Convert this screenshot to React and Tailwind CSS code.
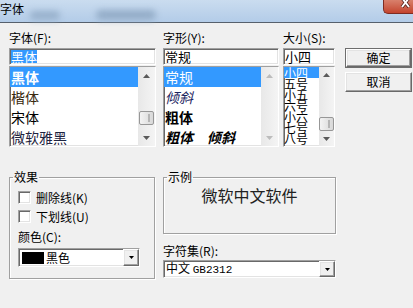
import React from 'react';

const sunken =
  'border border-t-[#a0a0a0] border-l-[#a0a0a0] border-r-white border-b-white shadow-[inset_1px_1px_0_#696969,inset_-1px_-1px_0_#e3e3e3] bg-white';
const raised =
  'border border-t-white border-l-white border-r-[#696969] border-b-[#696969] shadow-[inset_-1px_-1px_0_#a0a0a0,inset_1px_1px_0_#e3e3e3] bg-[#f0f0f0]';

const Arrow = ({ up, color = '#5a5a5a' }) => (
  <svg width="7" height="4" viewBox="0 0 7 4">
    <path d={up ? 'M0 4 L3.5 0 L7 4 Z' : 'M0 0 L3.5 4 L7 0 Z'} fill={color} />
  </svg>
);

const ScrollBar = ({ width = 'w-[17px]', thumb, thumbTop = 0, disabled }) => (
  <div className={`${width} h-full flex flex-col bg-gradient-to-r from-[#e8e8e8] to-[#f4f4f4]`}>
    <div className="h-[17px] flex items-center justify-center">
      <Arrow up color={disabled ? '#bcbcbc' : '#5a5a5a'} />
    </div>
    <div className="flex-1 flex flex-col items-center">
      {thumb && (
        <div
          className="w-[15px] h-[14px] rounded-[2px] border border-[#979797] bg-gradient-to-r from-[#f3f3f3] to-[#d8d8d8] flex items-center justify-end pr-[3px]"
          style={{ marginTop: thumbTop }}
        >
          <div className="w-[2px] h-[8px] border-l border-r border-[#b5b5b5]" />
        </div>
      )}
    </div>
    <div className="h-[17px] flex items-center justify-center">
      <Arrow color={disabled ? '#bcbcbc' : '#5a5a5a'} />
    </div>
  </div>
);

const Label = ({ children }) => (
  <div className="h-[17px] text-[12px] leading-[14px] text-black whitespace-nowrap">{children}</div>
);

const Input = ({ children }) => (
  <div className={`${sunken} h-[17px] mb-[1px] px-[1px] text-[13px] leading-[13px] flex items-center overflow-hidden`}>
    {children}
  </div>
);

const DropButton = ({ className }) => (
  <div className={`${raised} ${className} flex items-center justify-center`}>
    <svg width="5" height="3" viewBox="0 0 5 3">
      <path d="M0 0 L2.5 3 L5 0 Z" fill="#000" />
    </svg>
  </div>
);

const fonts = [
  { name: '黑体', cls: 'font-bold' },
  { name: '楷体', cls: 'text-[#3a2a10]' },
  { name: '宋体', cls: '' },
  { name: '微软雅黑', cls: 'text-[#1e2440]' },
];

const styles = [
  { name: '常规', cls: '' },
  { name: '倾斜', cls: 'italic text-[#1c2560]' },
  { name: '粗体', cls: 'font-bold' },
  { name: '粗体　倾斜', cls: 'font-bold italic whitespace-pre' },
];

const sizes = ['小四', '五号', '小五', '六号', '小六', '七号', '八号'];

export default function App() {
  return (
    <div className="w-[413px] h-[308px] bg-[#f0f0f0] overflow-hidden flex flex-col font-['Noto_Sans_CJK_SC',sans-serif] text-black">
      {/* title bar */}
      <div className="h-[23px] flex items-start bg-gradient-to-b from-[#cadcef] to-[#b3cce8] border-b border-[#56606c]">
        <div className="text-[12px] leading-[14px] pt-[2px]">字体</div>
        <div className="ml-[6px] mt-[11px] w-[30px] h-[9px] rounded-full bg-[#98b1cc] blur-[3px]" />
        <div className="ml-[36px] mt-[10px] w-[60px] h-[10px] rounded-full bg-[#94adc8] blur-[3px]" />
        <div className="ml-auto w-[30px] h-[14px] rounded-bl-[5px] border border-t-0 border-r-0 border-[#7e2c22] bg-gradient-to-b from-[#d8806c] to-[#c3432d] flex justify-end overflow-hidden">
          <svg width="12" height="8" viewBox="0 0 12 8" className="mr-[1px]">
            <path d="M2 -2 L9 7 M9 -2 L2 7" stroke="#4a1a12" strokeWidth="3.4" />
            <path d="M2 -2 L9 7 M9 -2 L2 7" stroke="#fff" strokeWidth="2" />
          </svg>
        </div>
      </div>

      {/* top section */}
      <div className="flex pt-[8px]">
        {/* font */}
        <div className="ml-[9px] w-[147px] flex flex-col">
          <Label>字体(F):</Label>
          <Input>
            <span className="bg-[#3399ff] text-white">黑体</span>
          </Input>
          <div className={`${sunken} h-[81px] flex`}>
            <div className="flex-1 flex flex-col overflow-hidden">
              {fonts.map((f, i) => (
                <div
                  key={f.name}
                  className={`h-[20px] shrink-0 leading-[20px] text-[14px] pl-[1px] ${f.cls} ${
                    i === 0 ? 'bg-[#3399ff] text-white' : ''
                  }`}
                >
                  {f.name}
                </div>
              ))}
            </div>
            <ScrollBar thumb thumbTop={27} />
          </div>
        </div>

        {/* style */}
        <div className="ml-[7px] w-[116px] flex flex-col">
          <Label>字形(Y):</Label>
          <Input>常规</Input>
          <div className={`${sunken} h-[81px] flex`}>
            <div className="flex-1 flex flex-col overflow-hidden">
              {styles.map((s, i) => (
                <div
                  key={s.name}
                  className={`h-[20px] shrink-0 leading-[20px] text-[14px] pl-[1px] ${
                    i === 0 ? 'bg-[#3399ff] text-white' : s.cls
                  }`}
                >
                  {s.name}
                </div>
              ))}
            </div>
            <ScrollBar disabled />
          </div>
        </div>

        {/* size */}
        <div className="ml-[4px] w-[52px] flex flex-col">
          <Label>大小(S):</Label>
          <Input>小四</Input>
          <div className={`${sunken} h-[81px] flex`}>
            <div className="flex-1 flex flex-col overflow-hidden">
              {sizes.map((s, i) => (
                <div key={s} className="h-[11px] shrink-0 leading-[11px] text-[12px] flex">
                  <span className={i === 0 ? 'bg-[#3399ff] text-white w-full' : ''}>{s}</span>
                </div>
              ))}
            </div>
            <ScrollBar width="w-[15px]" thumb thumbTop={35} />
          </div>
        </div>

        {/* buttons */}
        <div className="ml-[10px] w-[67px] pt-[17px] flex flex-col">
          <div className="h-[20px] border border-[#6d6d6d] flex">
            <div className={`${raised} flex-1 flex items-center justify-center text-[12px] leading-[14px]`}>确定</div>
          </div>
          <div className={`${raised} mt-[4px] h-[20px] flex items-center justify-center text-[12px] leading-[14px]`}>
            取消
          </div>
        </div>
      </div>

      {/* bottom section */}
      <div className="flex mt-[23px] items-start">
        <fieldset className="ml-[9px] w-[146px] h-[109px] border border-[#a0a0a0] shadow-[inset_1px_1px_0_#fff,1px_1px_0_#fff]">
          <legend className="ml-[3px] px-[1px] text-[12px] leading-[14px]">效果</legend>
          <div className="pt-[7px] pl-[8px] flex flex-col">
            <div className="flex items-center h-[13px]">
              <div className={`${sunken} w-[13px] h-[13px]`} />
              <span className="ml-[5px] text-[12px] leading-[14px]">删除线(K)</span>
            </div>
            <div className="flex items-center h-[13px] mt-[6px]">
              <div className={`${sunken} w-[13px] h-[13px]`} />
              <span className="ml-[5px] text-[12px] leading-[14px]">下划线(U)</span>
            </div>
            <div className="mt-[7px] h-[14px] text-[12px] leading-[14px]">颜色(C):</div>
            <div className={`${sunken} mt-[4px] w-[122px] h-[19px] flex items-center`}>
              <div className="ml-[3px] w-[22px] h-[12px] bg-black" />
              <span className="ml-[2px] text-[12px] leading-[14px]">黑色</span>
              <DropButton className="ml-auto w-[16px] h-full" />
            </div>
          </div>
        </fieldset>

        <div className="ml-[8px] w-[173px] flex flex-col">
          <fieldset className="h-[64px] border border-[#a0a0a0] shadow-[inset_1px_1px_0_#fff,1px_1px_0_#fff] flex flex-col">
            <legend className="ml-[3px] px-[1px] text-[12px] leading-[14px]">示例</legend>
            <div className="flex-1 flex items-center justify-center pt-[3px] text-[16px] leading-[16px] text-[#222]">
              微软中文软件
            </div>
          </fieldset>
          <div className="mt-[10px] h-[14px] text-[12px] leading-[14px]">字符集(R):</div>
          <div className={`${sunken} mt-[2px] h-[18px] flex items-center`}>
            <span className="ml-[2px] text-[12px] leading-[14px] whitespace-pre">
              中文 <span className="font-['Liberation_Mono',monospace] text-[11px]">GB2312</span>
            </span>
            <DropButton className="ml-auto w-[16px] h-full" />
          </div>
        </div>
      </div>
    </div>
  );
}
